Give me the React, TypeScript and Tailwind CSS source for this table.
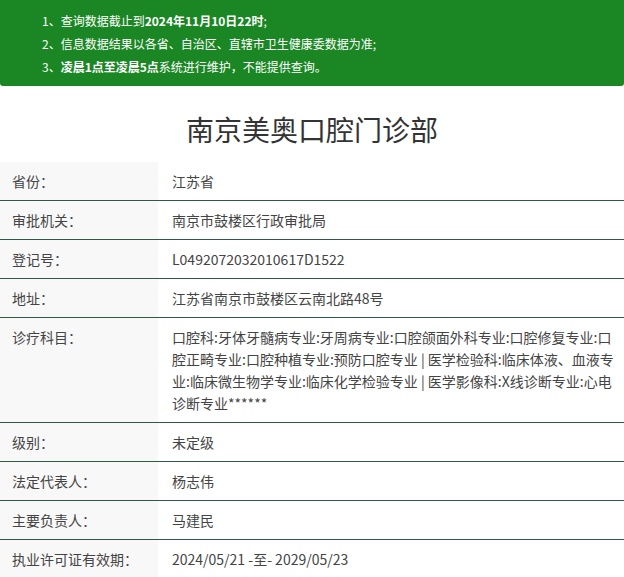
const rows: { label: string; value: string }[] = [
  { label: '省份：', value: '江苏省' },
  { label: '审批机关：', value: '南京市鼓楼区行政审批局' },
  { label: '登记号：', value: 'L0492072032010617D1522' },
  { label: '地址：', value: '江苏省南京市鼓楼区云南北路48号' },
  {
    label: '诊疗科目：',
    value:
      '口腔科:牙体牙髓病专业:牙周病专业:口腔颌面外科专业:口腔修复专业:口腔正畸专业:口腔种植专业:预防口腔专业 | 医学检验科:临床体液、血液专业:临床微生物学专业:临床化学检验专业 | 医学影像科:X线诊断专业:心电诊断专业******',
  },
  { label: '级别：', value: '未定级' },
  { label: '法定代表人：', value: '杨志伟' },
  { label: '主要负责人：', value: '马建民' },
  { label: '执业许可证有效期：', value: '2024/05/21 -至- 2029/05/23' },
];

export default function App() {
  return (
    <div className="w-[624px] h-[577px] overflow-hidden bg-white font-['Microsoft_YaHei','Noto_Sans_CJK_SC',sans-serif] text-[#333]">
      {/* notice banner */}
      <div className="h-[86px] bg-[#1b8624] rounded-b-[3px] pl-[42px] pt-[9px] text-[12px] leading-[23px] text-white">
        <p>
          1、查询数据截止到<b>2024年11月10日22时</b>;
        </p>
        <p>2、信息数据结果以各省、自治区、直辖市卫生健康委数据为准;</p>
        <p>
          3、<b>凌晨1点至凌晨5点</b>系统进行维护，不能提供查询。
        </p>
      </div>

      <h1 className="h-[76px] flex items-center justify-center text-[28px] text-[#333] pt-[10px]">
        南京美奥口腔门诊部
      </h1>

      <div className="text-[14px] leading-[22px]">
        {rows.map((r, i) => (
          <div
            key={r.label}
            className={`flex ${i > 0 ? 'border-t border-[#2d5a46]' : ''}`}
          >
            <div className="w-[158px] shrink-0 bg-[#f8f8f8] pl-[12px] py-[8px] text-[#444]">
              {r.label}
            </div>
            <div className="flex-1 pl-[14px] pr-[8px] py-[8px] text-[#444]">
              {r.value}
            </div>
          </div>
        ))}
      </div>
    </div>
  );
}
